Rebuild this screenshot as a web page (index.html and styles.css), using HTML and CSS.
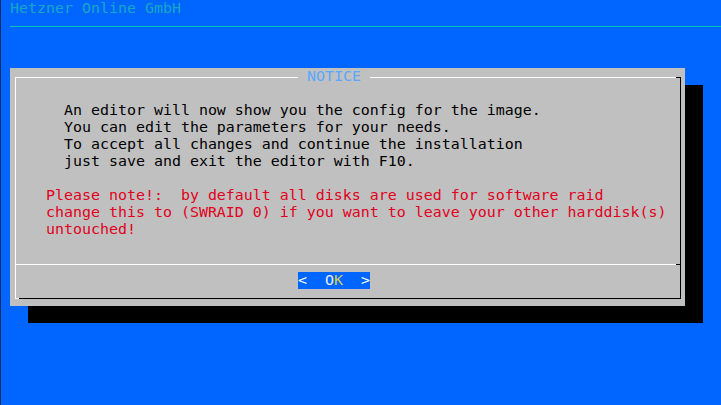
FILE: index.html
```html
<!DOCTYPE html>
<html>
<head>
<meta charset="utf-8">
<link rel="stylesheet" href="styles.css">
</head>
<body>
<div class="screen">
  <div class="backtitle">Hetzner Online GmbH</div>
  <div class="rule"></div>
  <div class="stage">
    <div class="dialog">
      <div class="frame">
        <div class="title"> NOTICE </div>
        <pre class="msg">  An editor will now show you the config for the image.
  You can edit the parameters for your needs.
  To accept all changes and continue the installation
  just save and exit the editor with F10.

<span class="warn">Please note!:  by default all disks are used for software raid
change this to (SWRAID 0) if you want to leave your other harddisk(s)
untouched!</span></pre>
        <div class="sep"></div>
        <div class="buttons"><span class="btn">&lt;  <span class="hot-o">O</span><span class="hot-k">K</span>  &gt;</span></div>
      </div>
    </div>
  </div>
</div>
</body>
</html>
```
FILE: styles.css
```css
html, body {
  margin: 0;
  padding: 0;
  background: #0066ff;
}
.screen {
  width: 720px;
  height: 405px;
  background: #0066ff;
  border-left: 1px solid #0a2a66;
  overflow: hidden;
  font-family: "DejaVu Sans Mono", "Liberation Mono", monospace;
  font-size: 14.95px;
  line-height: 17px;
}
.backtitle {
  height: 17px;
  padding-left: 9px;
  color: #14a8c8;
  white-space: pre;
}
.rule {
  height: 1px;
  margin: 9px 0 7px 9px;
  background: #00c0c0;
}
.stage {
  padding-top: 34px;
}
.dialog {
  margin-left: 9px;
  width: 675px;
  height: 238px;
  box-sizing: border-box;
  padding: 9px 0 0 5px;
  background: #c0c0c0;
  box-shadow: 18px 17px 0 #000;
}
.frame {
  position: relative;
  width: 666px;
  height: 222px;
  box-sizing: border-box;
  border-top: 1px solid #fff;
  border-left: 1px solid #fff;
  border-right: 1px solid #000;
  border-bottom: 1px solid #000;
  display: flex;
  flex-direction: column;
}
.frame::before {
  content: "";
  position: absolute;
  top: -1px;
  right: -1px;
  width: 5px;
  height: 1px;
  background: #000;
}
.frame::after {
  content: "";
  position: absolute;
  bottom: -1px;
  left: -1px;
  width: 4px;
  height: 1px;
  background: #fff;
}
.title {
  position: absolute;
  top: -10px;
  left: 282px;
  height: 17px;
  background: #c0c0c0;
  color: #5aa8ff;
  white-space: pre;
}
.msg {
  margin: 0;
  height: 186px;
  box-sizing: border-box;
  padding: 24px 0 0 30px;
  font: inherit;
  color: #000;
}
.warn {
  color: #e0001c;
}
.sep {
  height: 1px;
  background: linear-gradient(to right, #fff calc(100% - 4px), #000 0);
}
.buttons {
  padding: 7px 0 0 282px;
  height: 17px;
}
.btn {
  display: inline-block;
  height: 17px;
  background: #0066ff;
  color: #fff;
  white-space: pre;
}
.hot-o {
  color: #e8e8ff;
}
.hot-k {
  color: #d0d050;
}
```
